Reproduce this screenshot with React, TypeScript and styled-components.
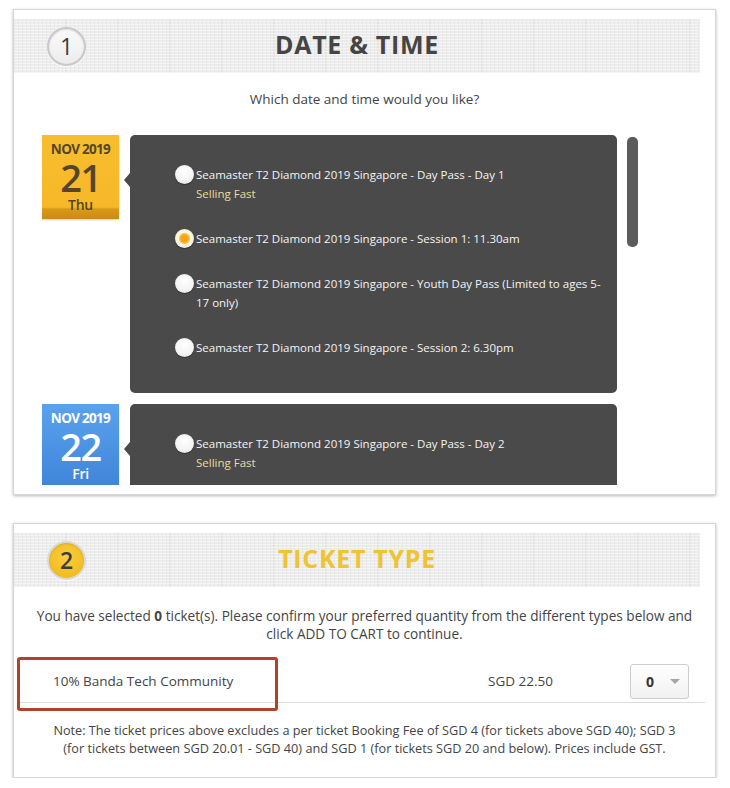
import React from 'react';
import styled, { createGlobalStyle } from 'styled-components';

const GlobalStyle = createGlobalStyle`
  html, body {
    margin: 0;
    padding: 0;
    background: #ffffff;
  }
  body {
    font-family: 'Open Sans', 'Liberation Sans', sans-serif;
    color: #444;
  }
  * {
    box-sizing: border-box;
  }
`;

const Page = styled.div`
  width: 730px;
  padding: 9px 14px 0 13px;
  display: flex;
  flex-direction: column;
  gap: 28px;
`;

const Card = styled.section`
  background: #fff;
  border: 1px solid #d6d6d6;
  box-shadow: 0 1px 3px rgba(0, 0, 0, 0.28);
  padding: 9px 0 9px 0;
`;

const Header = styled.div`
  height: 54px;
  margin-right: 15px;
  display: grid;
  grid-template-columns: 1fr auto 1fr;
  align-items: center;
  background-color: #ededed;
  background-image:
    repeating-linear-gradient(0deg, rgba(255, 255, 255, 0.45) 0 1px, transparent 1px 3px),
    repeating-linear-gradient(90deg, rgba(0, 0, 0, 0.035) 0 1px, transparent 1px 4px),
    repeating-linear-gradient(90deg, transparent 0 51px, rgba(0, 0, 0, 0.05) 51px 52px);
`;

const StepCircle = styled.div<{ $active?: boolean }>`
  width: 39px;
  height: 39px;
  margin-left: 33px;
  border-radius: 50%;
  border: 2px solid ${(p) => (p.$active ? '#d9d9d9' : '#c9c9c9')};
  background: ${(p) =>
    p.$active
      ? 'radial-gradient(circle at 50% 40%, #f9cf3e 0%, #f2bd22 70%, #e7ac12 100%)'
      : 'linear-gradient(#fafafa, #ececec)'};
  box-shadow: inset 0 1px 2px rgba(0, 0, 0, 0.12), 0 1px 1px rgba(255, 255, 255, 0.8);
  display: flex;
  align-items: center;
  justify-content: center;
  font-size: 23px;
  font-weight: ${(p) => (p.$active ? 600 : 400)};
  color: #3d3d3d;
  line-height: 1;
`;

const Title = styled.h2<{ $color: string }>`
  margin: 0 0 3px;
  font-family: 'Open Sans', 'Liberation Sans', sans-serif;
  font-size: 25px;
  line-height: 1;
  font-weight: 700;
  letter-spacing: 0.7px;
  color: ${(p) => p.$color};
`;

const Prompt = styled.p`
  margin: 16px 0 0;
  text-align: center;
  font-size: 13.5px;
  line-height: 20px;
  color: #444;
`;

const ScheduleArea = styled.div`
  margin-top: 26px;
  height: 350px;
  padding-left: 28px;
  display: flex;
  gap: 10px;
`;

const DayList = styled.div`
  width: 575px;
  height: 100%;
  overflow: hidden;
  display: flex;
  flex-direction: column;
  gap: 11px;
`;

const ScrollTrack = styled.div`
  width: 11px;
  padding-top: 2px;
`;

const ScrollThumb = styled.div`
  height: 110px;
  border-radius: 5px;
  background: #5b5b5b;
`;

const DayRow = styled.div`
  display: flex;
  align-items: flex-start;
  gap: 11px;
`;

const DateBadge = styled.div<{ $tone: 'yellow' | 'blue' }>`
  flex: none;
  width: 77px;
  height: 84px;
  display: flex;
  flex-direction: column;
  align-items: center;
  padding-top: 5px;
  color: ${(p) => (p.$tone === 'yellow' ? '#54462a' : '#ffffff')};
  background: ${(p) =>
    p.$tone === 'yellow'
      ? 'linear-gradient(#f8bd2e 0%, #f6b828 86%, #d99a18 88%, #c98b14 100%)'
      : 'linear-gradient(#5aa2ec 0%, #4a90e2 60%, #3f84d8 100%)'};
  box-shadow: 0 1px 2px rgba(0, 0, 0, 0.2);
`;

const BadgeMonth = styled.div`
  font-size: 13.5px;
  font-weight: 700;
  letter-spacing: -0.7px;
  line-height: 18px;
`;

const BadgeDay = styled.div`
  font-size: 38px;
  font-weight: 600;
  line-height: 38px;
  letter-spacing: -1.5px;
`;

const BadgeWeekday = styled.div`
  font-size: 14px;
  font-weight: 600;
  line-height: 18px;
  letter-spacing: -0.3px;
`;

const SessionPanel = styled.div`
  position: relative;
  width: 487px;
  flex: none;
  background: #4b4a4a;
  border-radius: 5px;
  padding: 30px 8px 36px 45px;
  display: flex;
  flex-direction: column;
  gap: 26px;

  &::before {
    content: '';
    position: absolute;
    left: -6px;
    top: 38px;
    border-style: solid;
    border-width: 7px 6px 7px 0;
    border-color: transparent #4b4a4a transparent transparent;
  }
`;

const Session = styled.label`
  display: flex;
  align-items: flex-start;
  gap: 2px;
  color: #f4f4f4;
  font-size: 11.5px;
  line-height: 19px;
`;

const Radio = styled.span<{ $checked?: boolean }>`
  flex: none;
  width: 19px;
  height: 19px;
  border-radius: 50%;
  background: ${(p) =>
    p.$checked
      ? 'radial-gradient(circle, #f4a51a 0 3.5px, #f8c24a 4.5px 5px, #fdf6e0 6px, #eeeae0 100%)'
      : 'radial-gradient(circle at 50% 35%, #ffffff 0%, #f3f3f3 60%, #d9d9d9 100%)'};
  box-shadow: 0 1px 1px rgba(0, 0, 0, 0.35);
`;

const SessionText = styled.div`
  display: flex;
  flex-direction: column;
`;

const SellingFast = styled.span`
  color: #e9dc9c;
`;

const Intro = styled.p`
  margin: 20px 0 0;
  padding: 0 18px;
  text-align: center;
  font-size: 13.6px;
  line-height: 18px;
  color: #444;

  b {
    font-weight: 700;
  }
`;

const TicketRow = styled.div`
  position: relative;
  margin: 19px 10px 0 6px;
  height: 41px;
  border-bottom: 1px solid #dcdcdc;
  display: grid;
  grid-template-columns: 1fr 183px 96px;
  align-items: center;
  padding-bottom: 2px;
  font-size: 13.5px;
  color: #444;
`;

const TicketName = styled.div`
  padding-left: 33px;
`;

const TicketPrice = styled.div`
  padding-left: 62px;
`;

const QtySelect = styled.div`
  width: 59px;
  height: 35px;
  margin-left: 21px;
  border: 1px solid #cdcdcd;
  border-radius: 3px;
  background: linear-gradient(#ffffff, #f1f1f1);
  display: flex;
  align-items: center;
  gap: 16px;
  padding-left: 15px;
  font-weight: 700;
  font-size: 14px;
  color: #333;
`;

const Caret = styled.span`
  width: 0;
  height: 0;
  border-style: solid;
  border-width: 5px 5px 0 5px;
  border-color: #a5a5a5 transparent transparent transparent;
`;

const Highlight = styled.div`
  position: absolute;
  left: -3px;
  top: -5px;
  width: 261px;
  height: 54px;
  border: 3px solid #b2402c;
  border-radius: 3px;
  pointer-events: none;
`;

const Note = styled.p`
  margin: 18px 0 0;
  padding: 0 30px 11px;
  text-align: center;
  font-size: 12.7px;
  line-height: 18px;
  color: #444;
`;

type SessionItem = { label: string; fast?: boolean; checked?: boolean };

const day1: SessionItem[] = [
  { label: 'Seamaster T2 Diamond 2019 Singapore - Day Pass - Day 1', fast: true },
  { label: 'Seamaster T2 Diamond 2019 Singapore - Session 1: 11.30am', checked: true },
  { label: 'Seamaster T2 Diamond 2019 Singapore - Youth Day Pass (Limited to ages 5-17 only)' },
  { label: 'Seamaster T2 Diamond 2019 Singapore - Session 2: 6.30pm' },
];

const day2: SessionItem[] = [
  { label: 'Seamaster T2 Diamond 2019 Singapore - Day Pass - Day 2', fast: true },
  { label: 'Seamaster T2 Diamond 2019 Singapore - Session 1: 11.30am' },
];

const days = [
  { month: 'NOV 2019', day: '21', weekday: 'Thu', tone: 'yellow' as const, sessions: day1 },
  { month: 'NOV 2019', day: '22', weekday: 'Fri', tone: 'blue' as const, sessions: day2 },
];

const App: React.FC = () => {
  return (
    <>
      <GlobalStyle />
      <Page>
        <Card>
          <Header>
            <StepCircle>1</StepCircle>
            <Title $color="#454545">DATE &amp; TIME</Title>
            <span />
          </Header>
          <Prompt>Which date and time would you like?</Prompt>

          <ScheduleArea>
            <DayList>
              {days.map((d) => (
                <DayRow key={d.day}>
                  <DateBadge $tone={d.tone}>
                    <BadgeMonth>{d.month}</BadgeMonth>
                    <BadgeDay>{d.day}</BadgeDay>
                    <BadgeWeekday>{d.weekday}</BadgeWeekday>
                  </DateBadge>
                  <SessionPanel>
                    {d.sessions.map((s) => (
                      <Session key={s.label}>
                        <Radio $checked={s.checked} />
                        <SessionText>
                          <span>{s.label}</span>
                          {s.fast && <SellingFast>Selling Fast</SellingFast>}
                        </SessionText>
                      </Session>
                    ))}
                  </SessionPanel>
                </DayRow>
              ))}
            </DayList>
            <ScrollTrack>
              <ScrollThumb />
            </ScrollTrack>
          </ScheduleArea>
        </Card>

        <Card>
          <Header>
            <StepCircle $active>2</StepCircle>
            <Title $color="#f1c232">TICKET TYPE</Title>
            <span />
          </Header>
          <Intro>
            You have selected <b>0</b> ticket(s). Please confirm your preferred quantity from the different types below and click ADD TO CART to continue.
          </Intro>
          <TicketRow>
            <TicketName>10% Banda Tech Community</TicketName>
            <TicketPrice>SGD 22.50</TicketPrice>
            <QtySelect>
              0
              <Caret />
            </QtySelect>
            <Highlight />
          </TicketRow>
          <Note>
            Note: The ticket prices above excludes a per ticket Booking Fee of SGD 4 (for tickets above SGD 40); SGD 3 (for tickets between SGD 20.01 - SGD 40) and SGD 1 (for tickets SGD 20 and below). Prices include GST.
          </Note>
        </Card>
      </Page>
    </>
  );
};

export default App;
